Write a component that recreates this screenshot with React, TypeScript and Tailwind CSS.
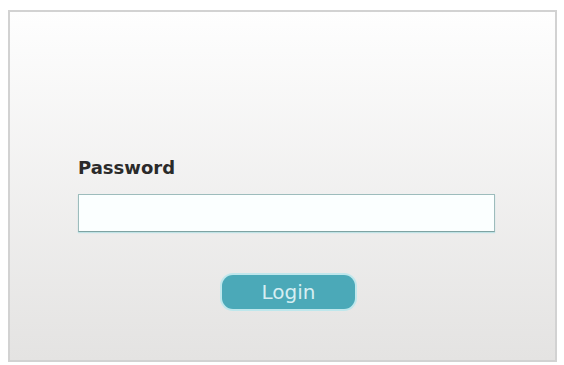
import React from 'react';

const App = () => {
  return (
    <div className="w-[564px] h-[365px] bg-white pt-[10px] pl-[8px]" style={{ fontFamily: '"DejaVu Sans", Verdana, sans-serif' }}>
      <div className="w-[549px] h-[352px] border-2 border-[#d2d2d2] bg-gradient-to-b from-[#fefefe] to-[#e4e3e2] flex flex-col">
        <div className="pl-[68px] pt-[145px]">
          <label className="block text-[18px] font-bold text-[#2a2a2a] leading-[21px]">Password</label>
          <input
            type="password"
            className="mt-[16px] block w-[417px] h-[38px] bg-[#fbffff] border border-[#9dbcbc] border-b-[#7fa3a3] shadow-[0_1px_1px_rgba(160,220,225,0.6)] outline-none"
          />
        </div>
        <div className="flex justify-center mt-[43px] pl-[12px]">
          <button className="w-[133px] h-[34px] rounded-[11px] bg-[#4ba9b8] text-[#d6eef2] text-[20px] leading-none ring-2 ring-[#bfe7ec]">
            Login
          </button>
        </div>
      </div>
    </div>
  );
};

export default App;
